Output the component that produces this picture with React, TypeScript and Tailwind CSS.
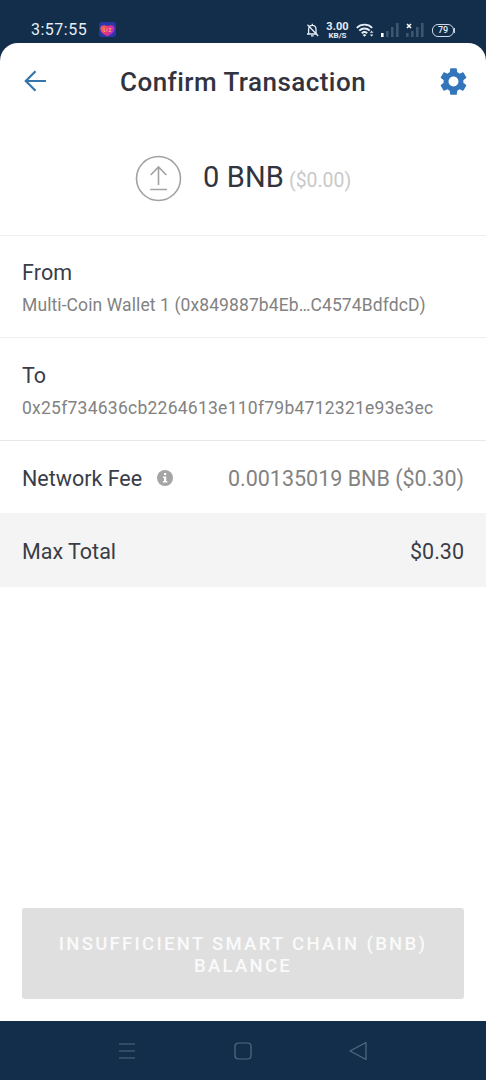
import React from 'react';
import { MdSettings } from 'react-icons/md';

const SIGNAL_BARS = [
  { x: 0, height: 4 },
  { x: 5, height: 6 },
  { x: 10, height: 10 },
  { x: 15, height: 14 },
];

const SignalBars: React.FC<{ active: number }> = ({ active }) => (
  <svg width="18" height="14" viewBox="0 0 18 14" aria-hidden="true">
    {SIGNAL_BARS.map((bar, i) => (
      <rect
        key={bar.x}
        x={bar.x}
        y={14 - bar.height}
        width="2.6"
        height={bar.height}
        fill={i < active ? '#ffffff' : '#3d5670'}
      />
    ))}
  </svg>
);

const StatusBar: React.FC = () => (
  <div className="flex h-[43px] shrink-0 items-start justify-between pl-[31px] pr-[31px] pt-[19px] text-[#e6edf5]">
    <div className="flex h-[22px] items-center">
      <span className="w-[58px] whitespace-nowrap text-[16px] leading-[22px] tracking-[0.5px]">3:57:55</span>
      <svg className="mb-[2px] ml-[10px]" width="17" height="15" viewBox="0 0 17 15" aria-hidden="true">
        <defs>
          <linearGradient id="heart" x1="0" y1="0" x2="1" y2="0.4">
            <stop offset="0" stopColor="#f0703c" />
            <stop offset="0.5" stopColor="#e83b78" />
            <stop offset="1" stopColor="#b12bd0" />
          </linearGradient>
        </defs>
        <rect width="17" height="15" rx="3" fill="#2a35a8" />
        <path d="M8.5 14.4C4.4 12.6 1.4 10 1.4 6.6C1.4 3 5 2.4 8.5 4C12 2.4 15.6 3 15.6 6.6C15.6 10 12.6 12.6 8.5 14.4Z" fill="url(#heart)" />
        <path d="M5 5.5V9.5H6.5M8 6.5V9.5M9.8 6.5H12L10 9.5H12.3" fill="none" stroke="#ff9d6b" strokeWidth="0.9" />
      </svg>
    </div>
    <div className="flex h-[22px] items-center">
      <svg width="13" height="14" viewBox="0 0 13 14" fill="none" stroke="currentColor" strokeWidth="1.3" aria-hidden="true">
        <path d="M1 11H11.2M2.6 10.7V6.4C2.6 3.8 4 2.4 6.3 2.4C8.6 2.4 10 3.8 10 6.4V10.7M6.3 0.8V2.4M5 12.8H7.7M1.5 1.7L12.2 13" />
      </svg>
      <div className="ml-[7px] flex w-[23px] flex-col items-center whitespace-nowrap font-bold">
        <span className="text-[11px] leading-[12px] tracking-[0.1px]">3.00</span>
        <span className="-mt-px text-[8px] leading-[8px]">KB/S</span>
      </div>
      <svg className="ml-[7px]" width="19" height="15" viewBox="0 0 19 15" fill="none" stroke="currentColor" aria-hidden="true">
        <path d="M0.8 4.8C5 0.6 12 0.6 16.2 4.8M3.3 7.6C6.2 4.8 10.8 4.8 13.7 7.6M5.8 10.2C7.4 8.8 9.6 8.8 11.2 10.2" strokeWidth="1.9" />
        <path d="M6.6 12L8.5 13.8L10.4 12L8.5 11Z" fill="currentColor" stroke="none" />
        <path d="M13.8 9.7L15.6 7.7L17.4 9.7ZM13.8 11.5L15.6 13.5L17.4 11.5Z" fill="currentColor" stroke="none" />
      </svg>
      <div className="ml-[6px] flex">
        <SignalBars active={1} />
      </div>
      <div className="relative ml-[7px] flex">
        <SignalBars active={0} />
        <svg className="absolute left-0 top-0 bg-[#122e4b]" width="6" height="6" viewBox="0 0 6 6" stroke="#ffffff" strokeWidth="1.5" aria-hidden="true">
          <path d="M1 1L5 5M5 1L1 5" />
        </svg>
      </div>
      <div className="ml-[8px] flex h-[13px] w-[22px] items-center justify-center rounded-[6px] border-[1.5px] border-[#cfdae6] text-[9px] font-medium leading-none">
        79
      </div>
      <div className="h-[5px] w-[1px] bg-[#cfdae6]" />
    </div>
  </div>
);

const Header: React.FC = () => (
  <header className="flex h-[76px] items-center pl-[24px] pr-[16px]">
    <button aria-label="Back" className="flex w-[96px]">
      <svg width="23" height="22" viewBox="0 0 23 22" fill="none" stroke="#3375ad" strokeWidth="2.2" aria-hidden="true">
        <path d="M22 11H2M11.5 1.2L1.8 11L11.5 20.8" />
      </svg>
    </button>
    <h1 className="whitespace-nowrap pt-[2px] text-[26px] font-medium leading-[32px] tracking-[0.46px] text-[#31343f]">Confirm Transaction</h1>
    <button aria-label="Settings" className="ml-auto flex">
      <MdSettings className="h-[33px] w-[33px] text-[#3375bb]" />
    </button>
  </header>
);

const NavBar: React.FC = () => (
  <nav className="flex h-[59px] shrink-0 items-center justify-between bg-[#122e4b] pl-[118px] pr-[119px]">
    <svg width="18" height="18" viewBox="0 0 18 18" fill="none" stroke="#536b82" strokeWidth="1.2" aria-hidden="true">
      <path d="M1 2H17M1 9H17M1 16H17" />
    </svg>
    <svg width="18" height="18" viewBox="0 0 18 18" fill="none" stroke="#536b82" strokeWidth="1.2" aria-hidden="true">
      <rect x="1" y="1" width="16" height="16" rx="3.5" />
    </svg>
    <svg width="18" height="20" viewBox="0 0 18 20" fill="none" stroke="#536b82" strokeWidth="1.2" strokeLinejoin="round" aria-hidden="true">
      <path d="M17 1.5V18.5L1 10Z" />
    </svg>
  </nav>
);

const App: React.FC = () => {
  return (
    <div className="flex h-[1080px] w-[486px] flex-col overflow-hidden bg-[#122e4b] font-['Roboto',sans-serif]">
      <StatusBar />
      <main className="flex flex-1 flex-col rounded-t-[18px] bg-white">
        <Header />

        <section className="flex h-[117px] items-center border-b border-[#efefef] pl-[135px]">
          <svg className="mt-[2px]" width="47" height="47" viewBox="0 0 47 47" fill="none" stroke="#a2a2a2" strokeWidth="1.6" aria-hidden="true">
            <circle cx="23.5" cy="23.5" r="22" />
            <path d="M23.5 30V12.5M15.7 20L23.5 12L31.3 20M15.2 34.5H32" />
          </svg>
          <div className="ml-[21px] flex items-baseline whitespace-nowrap pt-[2px]">
            <span className="text-[29px] leading-[34px] tracking-[0.15px] text-[#31343f]">0 BNB</span>
            <span className="ml-[5px] text-[19.4px] text-[#c9c9c9]">($0.00)</span>
          </div>
        </section>

        <div className="h-[102px] border-b border-[#efefef] px-[22px] pt-[23px]">
          <div className="text-[21.5px] leading-[28px] tracking-[0.1px] text-[#3a3d47]">From</div>
          <div className="mt-[6px] whitespace-nowrap text-[17.5px] leading-[24px] tracking-[0.1px] text-[#828282]">
            Multi-Coin Wallet 1 (0x849887b4Eb…C4574BdfdcD)
          </div>
        </div>

        <div className="h-[103px] border-b border-[#e8e8e8] px-[22px] pt-[24px]">
          <div className="text-[21.5px] leading-[28px] text-[#3a3d47]">To</div>
          <div className="mt-[6px] whitespace-nowrap text-[17.5px] leading-[24px] tracking-[0.25px] text-[#828282]">
            0x25f734636cb2264613e110f79b4712321e93e3ec
          </div>
        </div>

        <div className="flex h-[72px] items-center justify-between whitespace-nowrap px-[22px] pt-[5px] text-[21.5px]">
          <div className="flex items-center">
            <span className="text-[#3a3d47]">Network Fee</span>
            <svg className="mb-[4px] ml-[15px]" width="16" height="16" viewBox="0 0 16 16" aria-hidden="true">
              <circle cx="8" cy="8" r="8" fill="#a5a5a5" />
              <path d="M7 3H9.2V5H7ZM6 6.5H9.2V11H10.3V12.5H5.9V11H7V8H6Z" fill="#ffffff" />
            </svg>
          </div>
          <span className="text-[#828282]">0.00135019 BNB ($0.30)</span>
        </div>

        <div className="flex h-[74px] items-center justify-between bg-[#f4f4f4] px-[22px] pt-[5px] text-[21.5px] text-[#3a3d47]">
          <span>Max Total</span>
          <span>$0.30</span>
        </div>

        <button className="mx-[22px] mb-[22px] mt-auto flex h-[91px] flex-col items-center justify-center whitespace-nowrap rounded-[3px] bg-[#dfdfdf] pt-[2px] text-[18.5px] font-medium leading-[22px] tracking-[2.3px] text-[#fafafa]">
          <span>INSUFFICIENT SMART CHAIN (BNB)</span>
          <span>BALANCE</span>
        </button>
      </main>
      <NavBar />
    </div>
  );
};

export default App;
